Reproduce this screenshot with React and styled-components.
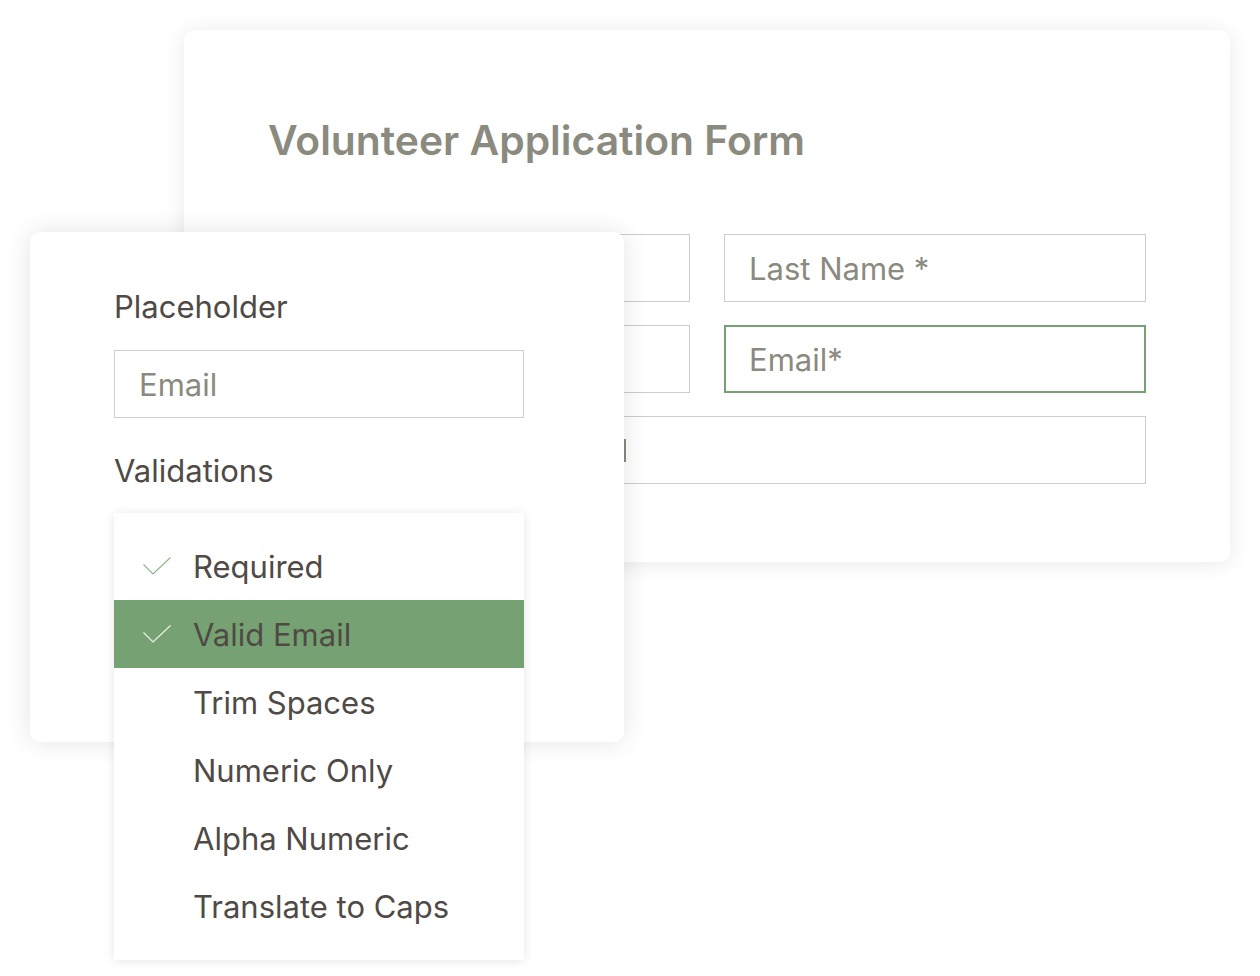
import React from 'react';
import styled, { createGlobalStyle } from 'styled-components';

const GlobalStyle = createGlobalStyle`
    body {
        margin: 0;
        background: #ffffff;
        font-family: Inter, "Noto Sans", sans-serif;
    }
`

const Canvas = styled.div`
    position: relative;
    width: 1260px;
    height: 976px;
    overflow: hidden;
    background: #ffffff;
`

const FormCard = styled.div`
    position: absolute;
    left: 184px;
    top: 30px;
    width: 1046px;
    height: 532px;
    box-sizing: border-box;
    padding: 86px 84px 0 84px;
    background: #ffffff;
    border-radius: 10px;
    box-shadow: 0 2px 22px rgba(0, 0, 0, 0.09);
`

const Title = styled.h1`
    margin: 0 0 70px 0;
    font-size: 40.8px;
    line-height: 48px;
    font-weight: 600;
    color: #8b8a7e;
`

const FieldGrid = styled.div`
    display: grid;
    grid-template-columns: 420px 422px;
    grid-auto-rows: 68px;
    column-gap: 34px;
    row-gap: 23px;
    margin-left: 2px;
`

const Field = styled.div`
    grid-column: ${props => props.wide ? '1 / -1' : 'auto'};
    display: flex;
    align-items: center;
    box-sizing: border-box;
    padding-left: ${props => props.focused ? '23px' : '24px'};
    border: ${props => props.focused ? '2px solid #76a273' : '1px solid #cccccc'};
    font-size: 31px;
    color: #8b8a7e;
`

const Caret = styled.span`
    display: block;
    width: 2px;
    height: 23px;
    margin-left: ${props => props.offset}px;
    background: #8b8a7e;
`

const SettingsCard = styled.div`
    position: absolute;
    left: 30px;
    top: 232px;
    width: 594px;
    height: 510px;
    box-sizing: border-box;
    padding: 57px 0 0 84px;
    background: #ffffff;
    border-radius: 10px;
    box-shadow: 0 0 26px rgba(0, 0, 0, 0.11);
`

const Label = styled.div`
    font-size: 31px;
    line-height: 36px;
    color: #4f4a45;
    margin-bottom: ${props => props.gap}px;
`

const TextInput = styled.div`
    width: 410px;
    height: 68px;
    box-sizing: border-box;
    display: flex;
    align-items: center;
    padding-left: 24px;
    border: 1px solid #cccccc;
    font-size: 31px;
    color: #8b8a7e;
    margin-bottom: 35px;
`

const Menu = styled.ul`
    list-style: none;
    margin: 0;
    width: 410px;
    box-sizing: border-box;
    padding: 19px 0 20px;
    background: #ffffff;
    box-shadow: 0 1px 10px rgba(0, 0, 0, 0.1);
`

const MenuItem = styled.li`
    height: 68px;
    display: flex;
    align-items: center;
    gap: 22px;
    padding-left: 29px;
    font-size: 31px;
    color: #4f4a45;
    background: ${props => props.active ? '#76a273' : 'transparent'};
`

const CheckSlot = styled.span`
    width: 28px;
    height: 18px;
    display: flex;
`

const Check = ({ color }) => (
    <svg width="28" height="18" viewBox="0 0 28 18">
        <polyline points="0.5,7.5 10,17 27.5,0.5" fill="none" stroke={color} strokeWidth="1.1" />
    </svg>
)

const validations = [
    { name: 'Required', checked: true },
    { name: 'Valid Email', checked: true, active: true },
    { name: 'Trim Spaces' },
    { name: 'Numeric Only' },
    { name: 'Alpha Numeric' },
    { name: 'Translate to Caps' },
];

const App = () => {
    return (
        <Canvas>
            <GlobalStyle />
            <FormCard>
                <Title>Volunteer Application Form</Title>
                <FieldGrid>
                    <Field>First Name *</Field>
                    <Field>Last Name *</Field>
                    <Field>Phone</Field>
                    <Field focused>Email*</Field>
                    <Field wide><Caret offset={329} /></Field>
                </FieldGrid>
            </FormCard>
            <SettingsCard>
                <Label gap={25}>Placeholder</Label>
                <TextInput>Email</TextInput>
                <Label gap={24}>Validations</Label>
                <Menu>
                    {validations.map(item => (
                        <MenuItem key={item.name} active={item.active}>
                            <CheckSlot>
                                {item.checked ? <Check color={item.active ? '#eef4ec' : '#8ab487'} /> : null}
                            </CheckSlot>
                            {item.name}
                        </MenuItem>
                    ))}
                </Menu>
            </SettingsCard>
        </Canvas>
    )
}

export default App;
